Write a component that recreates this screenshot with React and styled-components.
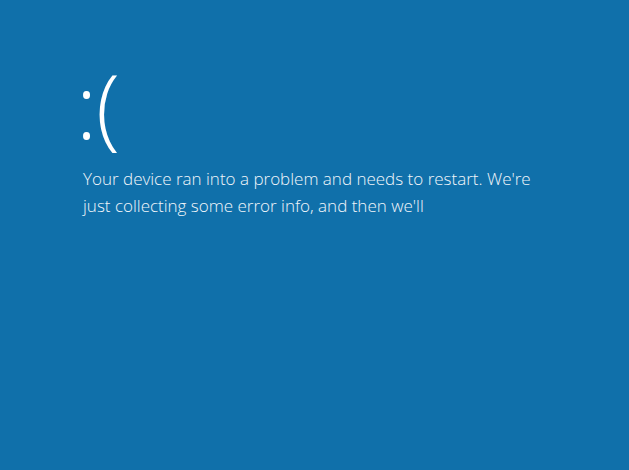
import React from 'react';
import styled, { createGlobalStyle } from 'styled-components';

const GlobalStyle = createGlobalStyle`
  html, body {
    margin: 0;
    padding: 0;
    background: #1070aa;
  }
`;

const Screen = styled.div`
  width: 629px;
  height: 470px;
  background: #1070aa;
  color: #ffffff;
  font-family: "Open Sans", "Noto Sans", sans-serif;
  font-variant-ligatures: none;
  -webkit-font-smoothing: antialiased;
  box-sizing: border-box;
  padding: 61px 0 0 83px;
  overflow: hidden;
`;

const Face = styled.div`
  margin-left: -7px;
  font-size: 88px;
  font-weight: 300;
  line-height: 1;
  height: 104px;
  letter-spacing: -1px;
`;

const Message = styled.p`
  margin: 0;
  width: 460px;
  font-size: 17px;
  font-weight: 300;
  line-height: 27px;
  color: #f2f6fa;
`;

export default function App() {
  return (
    <>
      <GlobalStyle />
      <Screen>
        <Face>:(</Face>
        <Message>
          Your device ran into a problem and needs to restart. We're just collecting some error info, and then we'll
        </Message>
      </Screen>
    </>
  );
}
